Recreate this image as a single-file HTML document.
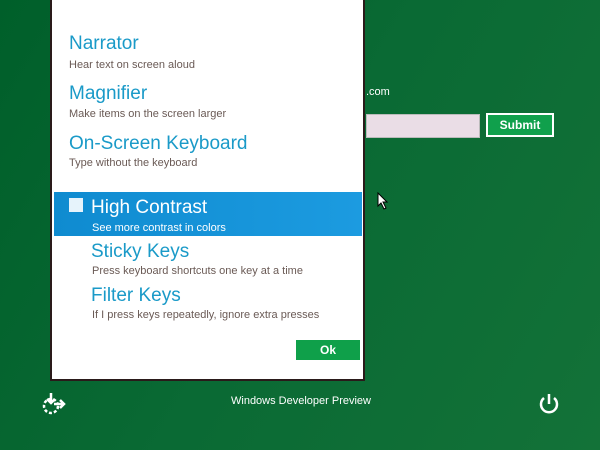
<!DOCTYPE html>
<html><head><style>
body{margin:0;width:600px;height:450px;overflow:hidden;background:linear-gradient(120deg,#005f2a 0%,#0a6a34 50%,#137238 100%);font-family:"Liberation Sans",sans-serif;position:relative}
.p{position:absolute;left:50px;top:-2px;width:311px;height:381px;background:#fff;border:2px solid #2a1a1a;border-top:none}
.t{position:absolute;left:17px;font-size:19px;color:#1a9ac8}
.s{position:absolute;left:17px;font-size:11px;color:#6a5a55}
.hl{position:absolute;left:2px;top:194px;width:308px;height:44px;background:linear-gradient(90deg,#0f8bd0,#1c9be0)}
.ok{position:absolute;left:244px;top:342px;width:64px;height:20px;background:#0fa04a;color:#fff;font-weight:bold;font-size:12px;text-align:center;line-height:20px}
</style></head><body>
<div style="position:absolute;left:366px;top:86px;color:#fff;font-size:11px">.com</div>
<div style="position:absolute;left:366px;top:114px;width:112px;height:22px;background:#eadde6;border:1px solid #bbb"></div>
<div style="position:absolute;left:486px;top:113px;width:64px;height:20px;background:#10a04c;border:2px solid #fff;color:#fff;font-weight:bold;font-size:12px;text-align:center;line-height:20px">Submit</div>
<svg style="position:absolute;left:377px;top:192px" width="12" height="18" viewBox="0 0 12 18"><path d="M1 1v13l3-3 3 6 2-1-3-6h4z" fill="#fff" stroke="#000" stroke-width="1"/></svg>
<div class="p">
<div class="t" style="top:35px">Narrator</div><div class="s" style="top:61px">Hear text on screen aloud</div>
<div class="t" style="top:85px">Magnifier</div><div class="s" style="top:110px">Make items on the screen larger</div>
<div class="t" style="top:135px">On-Screen Keyboard</div><div class="s" style="top:159px">Type without the keyboard</div>
<div class="hl"></div>
<div style="position:absolute;left:17px;top:200px;width:14px;height:14px;background:#e6f3fb"></div>
<div class="t" style="top:199px;left:39px;color:#fff">High Contrast</div><div class="s" style="top:224px;left:40px;color:#fff">See more contrast in colors</div>
<div class="t" style="top:243px;left:39px">Sticky Keys</div><div class="s" style="top:267px;left:40px">Press keyboard shortcuts one key at a time</div>
<div class="t" style="top:287px;left:39px">Filter Keys</div><div class="s" style="top:311px;left:40px">If I press keys repeatedly, ignore extra presses</div>
<div class="ok">Ok</div>
</div>
<div style="position:absolute;left:231px;top:395px;color:#fff;font-size:11px">Windows Developer Preview</div>
<svg style="position:absolute;left:40px;top:391px" width="26" height="26" viewBox="0 0 26 26" fill="none" stroke="#fff" stroke-width="2.5"><circle cx="11" cy="15" r="7" stroke-dasharray="3 2"/><path d="M11 2v10M7 8l4 4 4-4M14 13h10M20 9l4 4-4 4"/></svg>
<svg style="position:absolute;left:537px;top:392px" width="24" height="24" viewBox="0 0 24 24" fill="none" stroke="#fff" stroke-width="2.5"><path d="M7 6a8 8 0 1 0 10 0M12 2v10"/></svg>
</body></html>
